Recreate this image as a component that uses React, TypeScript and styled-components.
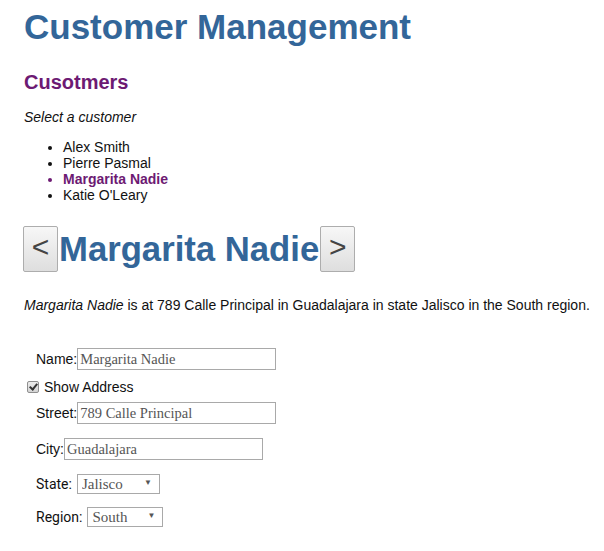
import React, { useState } from 'react';
import styled, { createGlobalStyle } from 'styled-components';

const GlobalStyle = createGlobalStyle`
  body {
    margin: 0;
    background: #ffffff;
    font-family: "Liberation Sans", Arial, sans-serif;
    color: #111;
  }
`;

type Customer = {
  name: string;
  street: string;
  city: string;
  state: string;
  region: string;
};

const customers: Customer[] = [
  { name: 'Alex Smith', street: '123 Main Street', city: 'Springfield', state: 'Illinois', region: 'North' },
  { name: 'Pierre Pasmal', street: '45 Rue de la Paix', city: 'Montreal', state: 'Quebec', region: 'East' },
  { name: 'Margarita Nadie', street: '789 Calle Principal', city: 'Guadalajara', state: 'Jalisco', region: 'South' },
  { name: "Katie O'Leary", street: '12 Harbour Road', city: 'Portland', state: 'Oregon', region: 'West' },
];

const Page = styled.div`
  padding: 0 24px;
`;

const Title = styled.h1`
  margin: 6px 0 0;
  font-size: 35px;
  font-weight: bold;
  color: #336699;
  line-height: 42px;
`;

const SubTitle = styled.h2`
  margin: 22px 0 0;
  font-size: 20px;
  font-weight: bold;
  color: #6d1a73;
  line-height: 24px;
`;

const Hint = styled.p`
  margin: 15px 0 0;
  font-size: 14px;
  font-style: italic;
`;

const List = styled.ul`
  margin: 14px 0 0;
  padding-left: 39px;
  font-size: 14px;
  line-height: 16px;
`;

const Item = styled.li<{ $selected: boolean }>`
  cursor: pointer;
  color: ${p => (p.$selected ? '#6d1a73' : '#111')};
  font-weight: ${p => (p.$selected ? 'bold' : 'normal')};
`;

const Nav = styled.div`
  display: flex;
  align-items: center;
  margin-top: 23px;
  margin-left: -1px;
`;

const NavButton = styled.button`
  width: 35px;
  height: 46px;
  padding: 0 0 4px;
  border: 1px solid #adadad;
  border-radius: 2px;
  background: linear-gradient(#f7f7f7, #dedede);
  font-family: "Liberation Sans", Arial, sans-serif;
  font-size: 30px;
  color: #444;
  cursor: pointer;
`;

const CurrentName = styled.h1`
  margin: 0 1px;
  font-size: 34.7px;
  font-weight: bold;
  color: #336699;
  line-height: 42px;
`;

const Summary = styled.p`
  margin: 25px 0 0;
  font-size: 14px;
  white-space: nowrap;
`;

const Form = styled.div`
  margin-top: 35px;
  display: flex;
  flex-direction: column;
`;

const Row = styled.label<{ $gap: number }>`
  display: flex;
  align-items: center;
  padding-left: 12px;
  margin-bottom: ${p => p.$gap}px;
  font-size: 14px;
`;

const CheckRow = styled.label`
  display: flex;
  align-items: center;
  gap: 5px;
  margin-left: 3px;
  margin-bottom: 7px;
  font-size: 14px;
`;

const Check = styled.input`
  appearance: none;
  position: relative;
  margin: 0;
  width: 12px;
  height: 12px;
  border: 1px solid #8f8f8f;
  border-radius: 2px;
  background: linear-gradient(#ececec, #d4d4d4);
  box-sizing: border-box;

  &:checked::after {
    content: '';
    position: absolute;
    left: 3px;
    top: 0px;
    width: 3px;
    height: 6px;
    border: solid #333;
    border-width: 0 2px 2px 0;
    transform: rotate(40deg);
  }
`;

const SelectLabel = styled.span`
  font-family: Roboto, "Liberation Sans", sans-serif;
  margin-right: 5px;
`;

const TextBox = styled.input`
  box-sizing: border-box;
  width: 199px;
  height: 22px;
  padding: 1px 2px;
  border: 1px solid #a9a9a9;
  font-family: "Liberation Serif", serif;
  font-size: 14.5px;
  color: #555;
`;

const SelectWrap = styled.span<{ $w: number }>`
  position: relative;
  display: inline-block;
  width: ${p => p.$w}px;
  height: 20px;
`;

const Select = styled.select`
  appearance: none;
  box-sizing: border-box;
  width: 100%;
  height: 100%;
  padding: 0 4px;
  border: 1px solid #a9a9a9;
  border-radius: 0;
  background: #fff;
  font-family: "Liberation Serif", serif;
  font-size: 15px;
  color: #555;
`;

const Arrow = styled.span`
  position: absolute;
  right: 8px;
  top: 4px;
  font-size: 8px;
  color: #555;
  pointer-events: none;
`;

const states = ['Illinois', 'Quebec', 'Jalisco', 'Oregon'];
const regions = ['North', 'East', 'South', 'West'];

export default function App() {
  const [index, setIndex] = useState(2);
  const [showAddress, setShowAddress] = useState(true);
  const c = customers[index];

  const prev = () => setIndex((index + customers.length - 1) % customers.length);
  const next = () => setIndex((index + 1) % customers.length);

  return (
    <Page>
      <GlobalStyle />
      <Title>Customer Management</Title>
      <SubTitle>Cusotmers</SubTitle>
      <Hint>Select a customer</Hint>
      <List>
        {customers.map((cu, i) => (
          <Item key={cu.name} $selected={i === index} onClick={() => setIndex(i)}>
            {cu.name}
          </Item>
        ))}
      </List>
      <Nav>
        <NavButton onClick={prev}>&lt;</NavButton>
        <CurrentName>{c.name}</CurrentName>
        <NavButton onClick={next}>&gt;</NavButton>
      </Nav>
      <Summary>
        <i>{c.name}</i> is at {c.street} in {c.city} in state {c.state} in the {c.region} region.
      </Summary>
      <Form>
        <Row $gap={9}>
          Name:<TextBox value={c.name} readOnly />
        </Row>
        <CheckRow>
          <Check type="checkbox" checked={showAddress} onChange={() => setShowAddress(!showAddress)} />
          Show Address
        </CheckRow>
        {showAddress && (
          <>
            <Row $gap={14}>
              Street:<TextBox value={c.street} readOnly />
            </Row>
            <Row $gap={14}>
              City:<TextBox value={c.city} readOnly />
            </Row>
            <Row $gap={13}>
              <SelectLabel>State:</SelectLabel>
              <SelectWrap $w={83}>
                <Select value={c.state} onChange={() => {}}>
                  {states.map(s => <option key={s}>{s}</option>)}
                </Select>
                <Arrow>▼</Arrow>
              </SelectWrap>
            </Row>
            <Row $gap={0}>
              <SelectLabel>Region:</SelectLabel>
              <SelectWrap $w={76}>
                <Select value={c.region} onChange={() => {}}>
                  {regions.map(r => <option key={r}>{r}</option>)}
                </Select>
                <Arrow>▼</Arrow>
              </SelectWrap>
            </Row>
          </>
        )}
      </Form>
    </Page>
  );
}
